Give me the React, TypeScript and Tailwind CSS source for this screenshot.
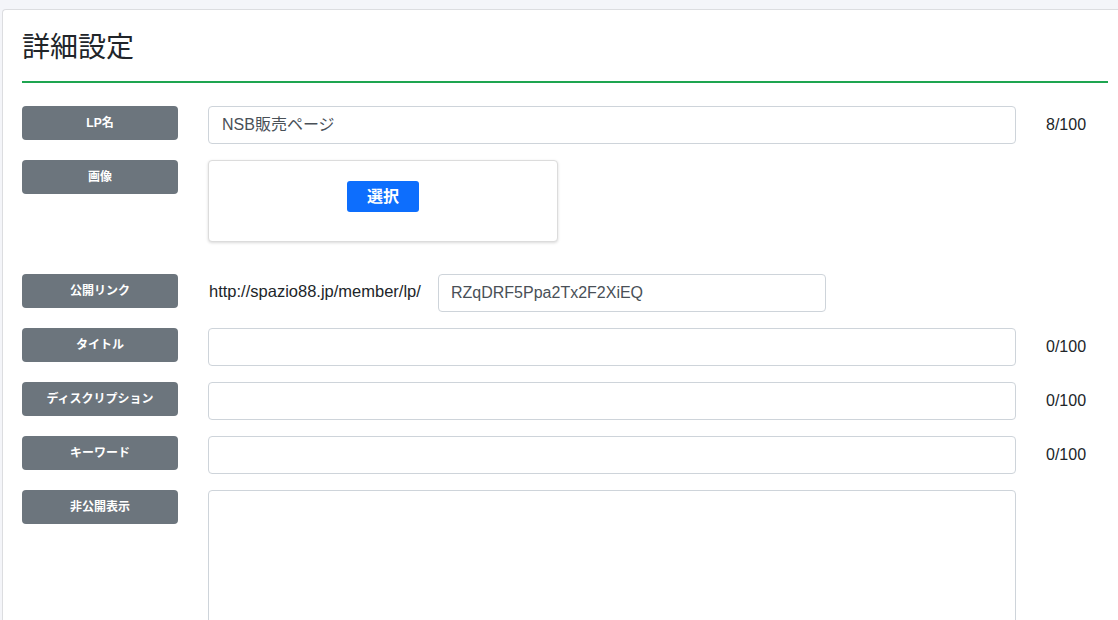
import React from 'react';

const Label = ({ children }: { children: React.ReactNode }) => (
  <div className="w-[156px] h-[34px] shrink-0 rounded-[4px] bg-[#6c757d] text-white text-[12px] font-bold flex items-center justify-center">
    {children}
  </div>
);

const TextRow = ({ label, value = '', count }: { label: string; value?: string; count: string }) => (
  <div className="flex items-start mb-4">
    <Label>{label}</Label>
    <div className="ml-[30px] w-[808px] h-[38px] rounded-[4px] border border-[#ced4da] bg-white px-[13px] flex items-center text-[16px] text-[#495057]">
      {value}
    </div>
    <div className="ml-[30px] h-[38px] flex items-center text-[16px] text-[#212529]">{count}</div>
  </div>
);

export default function App() {
  return (
    <div
      className="w-[1118px] h-[620px] overflow-hidden bg-[#f4f5f9] pt-[9px] pl-[2px]"
      style={{ fontFamily: '"Liberation Sans", "Noto Sans CJK JP", sans-serif' }}
    >
      <div className="h-full bg-white border-l border-t border-[#dcdde0] rounded-tl-[4px] pl-[19px] pr-[10px] pt-[19px]">
        {/* Header */}
        <div className="border-b-2 border-[#1ea550] pb-[14px] mb-[23px]">
          <h1 className="text-[28px] leading-[38px] text-[#212529]">詳細設定</h1>
        </div>

        <TextRow label="LP名" value="NSB販売ページ" count="8/100" />

        {/* Image */}
        <div className="flex items-start mb-[32px]">
          <Label>画像</Label>
          <div className="ml-[30px] w-[350px] h-[82px] rounded-[4px] border border-[#dcdcdc] bg-white shadow-[0_1px_3px_rgba(0,0,0,0.15)] flex justify-center pt-[20px]">
            <button className="w-[72px] h-[31px] rounded-[3px] bg-[#0d6efd] text-white text-[16px] font-bold">
              選択
            </button>
          </div>
        </div>

        {/* Public link */}
        <div className="flex items-start mb-4">
          <Label>公開リンク</Label>
          <div className="ml-[31px] w-[229px] h-[34px] flex items-center text-[16.5px] text-[#212529] whitespace-nowrap">
            http://spazio88.jp/member/lp/
          </div>
          <div className="w-[388px] h-[38px] rounded-[4px] border border-[#ced4da] bg-white px-[12px] flex items-center text-[16px] text-[#495057]">
            RZqDRF5Ppa2Tx2F2XiEQ
          </div>
        </div>

        <TextRow label="タイトル" count="0/100" />
        <TextRow label="ディスクリプション" count="0/100" />
        <TextRow label="キーワード" count="0/100" />

        {/* Hidden display */}
        <div className="flex items-start">
          <Label>非公開表示</Label>
          <div className="ml-[30px] w-[808px] h-[200px] rounded-[4px] border border-[#ced4da] bg-white" />
        </div>
      </div>
    </div>
  );
}
